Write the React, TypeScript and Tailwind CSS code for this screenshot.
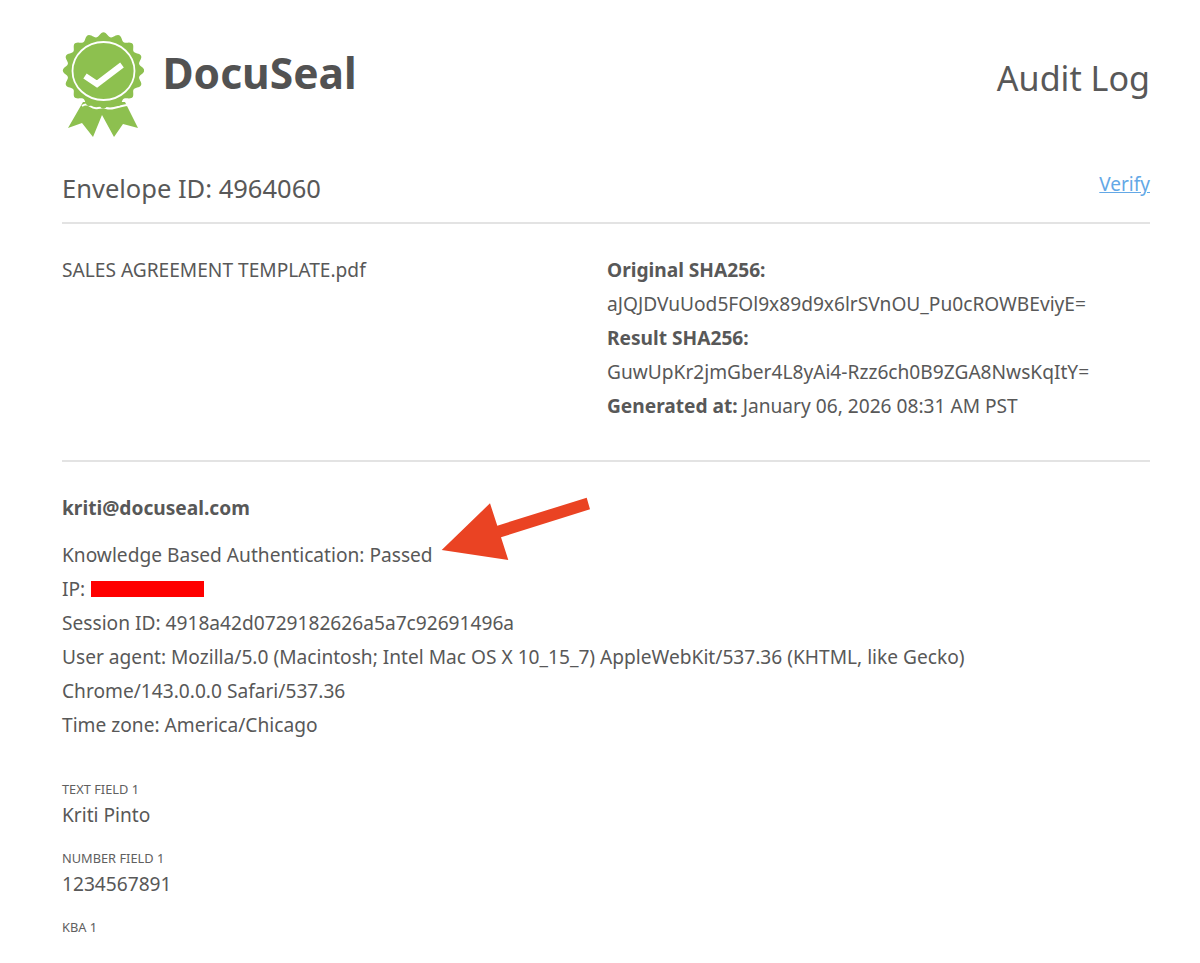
const seal = (() => {
  const n = 16, cx = 41.5, cy = 38.5, pts: string[] = [];
  for (let i = 0; i <= 240; i++) {
    const a = (i / 240) * Math.PI * 2;
    const k = 2.2 * Math.cos(n * a);
    pts.push(`${(cx + (38.5 + k) * Math.sin(a)).toFixed(2)},${(cy - (36 + k) * Math.cos(a)).toFixed(2)}`);
  }
  return pts.join(" ");
})();

function Logo() {
  return (
    <svg width="82" height="106" viewBox="0 0 82 106" className="shrink-0">
      <polygon points="21,70 6,96 20,91 31,105 40,83 52,105 61,92 76,96 63,70" fill="#8dc04f" />
      <path d="M20 74 Q24 71 28 74 T36 76 T44 76 T52 76 T60 74 T66 73" fill="none" stroke="#ffffff" strokeWidth="2" />
      <polygon points={seal} fill="#8dc04f" />
      <ellipse cx="41.5" cy="39" rx="31" ry="29" fill="none" stroke="#ffffff" strokeWidth="1.8" />
      <path d="M23 44 L35 52 L60 33" fill="none" stroke="#ffffff" strokeWidth="6" />
    </svg>
  );
}

function Arrow() {
  return (
    <svg width="152" height="68" viewBox="0 0 152 68" className="absolute left-[440px] top-[497px]">
      <polygon points="1.7,53 50,6.3 57.3,28.7 146.7,0.7 150,12.3 61,40.3 68.3,63" fill="#ea4323" />
    </svg>
  );
}

function Field({ label, value }: { label: string; value?: string }) {
  return (
    <div className="mb-[22px]">
      <div className="text-[12.8px] leading-[16px] text-[#606060]">{label}</div>
      {value && <div className="mt-[5px] text-[19.15px] leading-[26px]">{value}</div>}
    </div>
  );
}

export default function App() {
  return (
    <div className="relative h-[963px] w-[1200px] overflow-hidden bg-white pl-[62px] pr-[50px] font-['Noto_Sans','Open_Sans',sans-serif] text-[19.15px] leading-[34px] text-[#585858]">
      <header className="flex h-[144px] items-start justify-between pt-[32px]">
        <div className="flex items-start gap-[18.5px]">
          <Logo />
          <span className="mt-[9px] text-[42.5px] font-bold leading-[64px] text-[#525252]">DocuSeal</span>
        </div>
        <span className="mt-[19px] text-[34.1px] leading-[54px]">Audit Log</span>
      </header>

      <div className="flex h-[80px] items-start justify-between border-b-2 border-[#e3e3e3] pt-[27px]">
        <span className="text-[25.5px] leading-[34px]">Envelope ID: 4964060</span>
        <a className="text-[19px] leading-[26px] text-[#63a8e6] underline">Verify</a>
      </div>

      <section className="flex h-[238px] border-b-2 border-[#e3e3e3] pt-[29px]">
        <div className="w-[545px]">SALES AGREEMENT TEMPLATE.pdf</div>
        <div>
          <div className="font-bold">Original SHA256:</div>
          <div>aJQJDVuUod5FOl9x89d9x6lrSVnOU_Pu0cROWBEviyE=</div>
          <div className="font-bold">Result SHA256:</div>
          <div>GuwUpKr2jmGber4L8yAi4-Rzz6ch0B9ZGA8NwsKqItY=</div>
          <div>
            <span className="font-bold">Generated at:</span> January 06, 2026 08:31 AM PST
          </div>
        </div>
      </section>

      <section className="pt-[29px]">
        <div className="mb-[13px] font-bold">kriti@docuseal.com</div>
        <div>Knowledge Based Authentication: Passed</div>
        <div className="flex items-center">
          IP: <span className="ml-[6px] inline-block h-[16px] w-[113px] bg-[#ff0000]" />
        </div>
        <div>Session ID: 4918a42d0729182626a5a7c92691496a</div>
        <div className="w-[960px]">
          User agent: Mozilla/5.0 (Macintosh; Intel Mac OS X 10_15_7) AppleWebKit/537.36 (KHTML, like Gecko) Chrome/143.0.0.0 Safari/537.36
        </div>
        <div>Time zone: America/Chicago</div>
      </section>

      <section className="pt-[39px]">
        <Field label="TEXT FIELD 1" value="Kriti Pinto" />
        <Field label="NUMBER FIELD 1" value="1234567891" />
        <Field label="KBA 1" />
      </section>

      <Arrow />
    </div>
  );
}
